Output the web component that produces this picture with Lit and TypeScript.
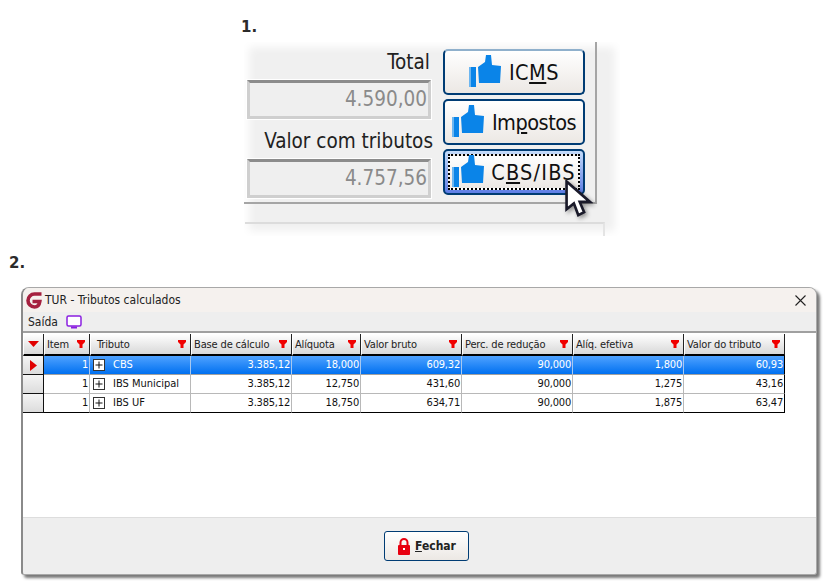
import { LitElement, html, css } from "lit";
import { customElement } from "lit/decorators.js";

const thumb = html`<svg class="thumb" viewBox="0 0 32 32"><path d="M0 12h7v20H0z" fill="#0a84e8"/><path d="M0 12h2v20H0z" fill="#6db6f0"/><path d="M9 12l7-5 1-7h5l1 10 9 1-1 17H10z" fill="#0a84e8"/></svg>`;
const funnel = html`<svg class="funnel" viewBox="0 0 8 8"><path d="M0 0h8v2L5.500 4.500V8h-3V4.500L0 2z" fill="#f00000"/></svg>`;

const cols = ["Item", "Tributo", "Base de cálculo", "Alíquota", "Valor bruto", "Perc. de redução", "Alíq. efetiva", "Valor do tributo"];
const rows = [
  ["1", "CBS", "3.385,12", "18,000", "609,32", "90,000", "1,800", "60,93"],
  ["1", "IBS Municipal", "3.385,12", "12,750", "431,60", "90,000", "1,275", "43,16"],
  ["1", "IBS UF", "3.385,12", "18,750", "634,71", "90,000", "1,875", "63,47"],
];

@customElement("app-root")
export class AppRoot extends LitElement {
  static styles = css`
    :host { display: block; width: 838px; height: 583px; overflow: hidden; background: #fff; color: #000;
      font-family: "DejaVu Sans", sans-serif; font-stretch: condensed; }
    .step { font-weight: 700; font-size: 15px; line-height: 18px; color: #2b2b2b; font-stretch: normal; }
    .step.one { margin: 18px 0 0 241px; height: 7px; }
    .step.two { margin: 18px 0 0 9px; height: 33px; }
    .snippet { margin: 17px 0 0 244px; width: 376px; height: 194px; background: #f0f0f0;
      box-shadow: inset 0 0 8px 5px #fff; display: flex; flex-direction: column; }
    .upper { width: 353px; height: 162px; box-sizing: border-box; border-right: 2px solid #a5a5a5; border-bottom: 2px solid #a5a5a5;
      display: flex; padding: 7px 10px 0 3px; gap: 10px; }
    .fields { width: 186px; display: flex; flex-direction: column; align-items: flex-end; font-size: 20.5px; color: #222; }
    .lbl { height: 31px; line-height: 26px; white-space: nowrap; }
    .lbl.total { padding-right: 3px; }
    .lbl.wide { margin-top: 6px; height: 34px; line-height: 32px; }
    .field { width: 184px; height: 39px; box-sizing: border-box; border: 3px solid #cfcfcf; border-top: 3px solid #8c8c8c; outline: 1px solid #fff;
      color: #8a8a8a; text-align: right; line-height: 33px; padding-right: 1px; background: #efefef; margin-right: 2px; }
    .btns { display: flex; flex-direction: column; gap: 4px; }
    .btn { width: 142px; height: 46px; box-sizing: border-box; border: 2px solid #003c74; border-radius: 5px;
      background: linear-gradient(#fff, #ece8e4); display: flex; align-items: center; justify-content: center; gap: 8px;
      font-size: 21.5px; color: #111; }
    .btn.top { border-top-color: #8fb0cc; }
    .btn.hot { background: linear-gradient(#c4dcfa, #5f7ee6); padding: 3px; position: relative; }
    .focus { width: 100%; height: 100%; border: 2px dotted #000; background: linear-gradient(#fff, #ece8e4);
      display: flex; align-items: center; justify-content: center; gap: 7px; box-sizing: border-box; }
    .thumb { width: 32px; height: 32px; flex: none; margin-top: -2px; }
    .btn u { text-underline-offset: 2px; }
    .tight { letter-spacing: -0.5px; }
    .loose { letter-spacing: 0.5px; }
    .spread { letter-spacing: 1.2px; }
    .cursor { position: absolute; left: 120px; top: 29px; width: 28px; height: 38px; filter: drop-shadow(2px 2px 2px #0006); }
    .lower { margin: 18px 0 0 1px; width: 358px; flex: 1; border-top: 2px solid #dcdcdc; border-right: 2px solid #e4e4e4; }
    .win { margin: 0 0 0 21px; width: 796px; height: 288px; box-sizing: border-box; border: 1px solid #a8a8a8; border-left: 2px solid #8a8a8a; border-radius: 8px 8px 3px 3px;
      background: #eee; box-shadow: 3px 3px 3px #777; display: flex; flex-direction: column; overflow: hidden; }
    .title { height: 24px; background: #f5f1ee; display: flex; align-items: center; padding: 0 10px 0 0; font-size: 12px; color: #222; gap: 2px; }
    .title span { flex: 1; }
    .menu { height: 21px; box-sizing: border-box; display: flex; align-items: center; padding-left: 5px; gap: 8px; font-size: 12px; color: #222; border-bottom: 2px solid #a0a0a0; }
    .body { flex: 1; background: #fff; padding-top: 1px; }
    .grid { display: grid; width: fit-content; grid-template-columns: 21px 46px 101px 101px 69px 101px 111px 111px 101px;
      font-size: 11px; }
    .hd { height: 22px; box-sizing: border-box; background: linear-gradient(#fff, #d8d8d8); border-right: 1px solid #222; border-bottom: 2px solid #000; border-left: 1px solid #fff;
      display: flex; align-items: center; padding: 0 4px 0 2px; color: #222; white-space: nowrap; letter-spacing: -0.15px; }
    .hd span { flex: 1; }
    .hd.trib span { padding-left: 4px; }
    .hd.ind { justify-content: center; padding: 0; }
    .funnel { width: 8px; height: 8px; flex: none; }
    .ind-c { height: 19px; box-sizing: border-box; background: linear-gradient(#f4f4f4, #dcdcdc); border-right: 1px solid #111; border-bottom: 1px solid #111; display: flex; align-items: center; justify-content: center; }
    .c { height: 19px; box-sizing: border-box; border-right: 1px solid #b8b8b8; border-bottom: 1px solid #b8b8b8; line-height: 18px; text-align: right; padding-right: 1px; color: #111; letter-spacing: -0.2px; }
    .c.last { border-right-color: #000; }
    .c.end { border-bottom-color: #000; }
    .c.sel { background: linear-gradient(#4fa2ff, #0070f0); color: #fff; border-right-color: #a6c8f0; border-bottom-color: #a0a0a0; }
    .c.sel.last { border-right-color: #000; }
    .c.tr { text-align: left; padding: 0 0 0 3px; display: flex; align-items: center; gap: 8px; letter-spacing: 0; }
    .plus { width: 12px; height: 12px; box-sizing: border-box; border: 1px solid #333; background: #fff; flex: none; }
    .plus svg { display: block; }
    .foot { height: 57px; box-sizing: border-box; border-top: 1px solid #ddd; display: flex; align-items: center; justify-content: center; padding-left: 14px; }
    .close { width: 85px; height: 30px; box-sizing: border-box; border: 1px solid #003c74; border-radius: 3px; background: linear-gradient(#fff, #ece8e4);
      display: flex; align-items: center; justify-content: center; gap: 4px; font-weight: 700; font-size: 12px; color: #222; }
  `;

  render() {
    return html`
      <div class="step one">1.</div>
      <div class="snippet">
        <div class="upper">
          <div class="fields">
            <div class="lbl total">Total</div>
            <div class="field">4.590,00</div>
            <div class="lbl wide">Valor com tributos</div>
            <div class="field">4.757,56</div>
          </div>
          <div class="btns">
            <div class="btn top">${thumb}<span class="loose">IC<u>M</u>S</span></div>
            <div class="btn">${thumb}<span class="tight">Im<u>p</u>ostos</span></div>
            <div class="btn hot"><div class="focus">${thumb}<span class="spread">C<u>B</u>S/IBS</span></div>
              <svg class="cursor" viewBox="0 0 19 26"><path d="M1 1v19l5-4 3 8 4-2-3-7h7z" fill="#fff" stroke="#1a1a2a" stroke-width="1.8"/></svg>
            </div>
          </div>
        </div>
        <div class="lower"></div>
      </div>
      <div class="step two">2.</div>
      <div class="win">
        <div class="title">
          <svg width="20" height="20" viewBox="0 0 20 20"><path d="M18.500 4H11.500a6.500 6.500 0 0 0 0 13c3 0 4.800-2 5.300-5.500H9.500" fill="none" stroke="#a5203f" stroke-width="3.600"/></svg>
          <span>TUR - Tributos calculados</span>
          <svg width="11" height="11" viewBox="0 0 11 11"><path d="M.5.500l10 10M10.500.500l-10 10" stroke="#222" stroke-width="1.100"/></svg>
        </div>
        <div class="menu">Saída
          <svg width="16" height="14" viewBox="0 0 16 14"><rect x="1" y="1" width="14" height="10" rx="1.500" fill="#fff" stroke="#8a1fe0" stroke-width="1.500"/><path d="M5 12.500h6" stroke="#8a1fe0" stroke-width="2"/></svg>
        </div>
        <div class="body">
          <div class="grid">
            <div class="hd ind"><svg width="11" height="6" viewBox="0 0 11 6"><path d="M0 0h11L5.500 6z" fill="#e00000"/></svg></div>
            ${cols.map((c, i) => html`<div class="hd ${i === 1 ? "trib" : ""}"><span>${c}</span>${funnel}</div>`)}
            ${rows.map((r, ri) => html`
              <div class="ind-c">${ri === 0 ? html`<svg width="7" height="11" viewBox="0 0 7 11"><path d="M0 0l7 5.500L0 11z" fill="#e00000"/></svg>` : ""}</div>
              ${r.map((v, i) => {
                const cls = `${ri === 0 ? "sel" : ""} ${ri === 2 ? "end" : ""} ${i === 7 ? "last" : ""}`;
                return i === 1
                  ? html`<div class="c tr ${cls}"><div class="plus"><svg width="10" height="10" viewBox="0 0 10 10"><path d="M1.500 5h7M5 1.500v7" stroke="#111"/></svg></div>${v}</div>`
                  : html`<div class="c ${cls}">${v}</div>`;
              })}
            `)}
          </div>
        </div>
        <div class="foot">
          <div class="close">
            <svg width="14" height="17" viewBox="0 0 14 17"><path d="M3.500 8V4.500a3.500 3.500 0 0 1 7 0V8" fill="none" stroke="#e8000f" stroke-width="2"/><rect x="1" y="7" width="12" height="10" rx="1" fill="#e8000f"/><rect x="6" y="10" width="2" height="2" fill="#fff"/></svg>
            <span><u>F</u>echar</span>
          </div>
        </div>
      </div>
    `;
  }
}
